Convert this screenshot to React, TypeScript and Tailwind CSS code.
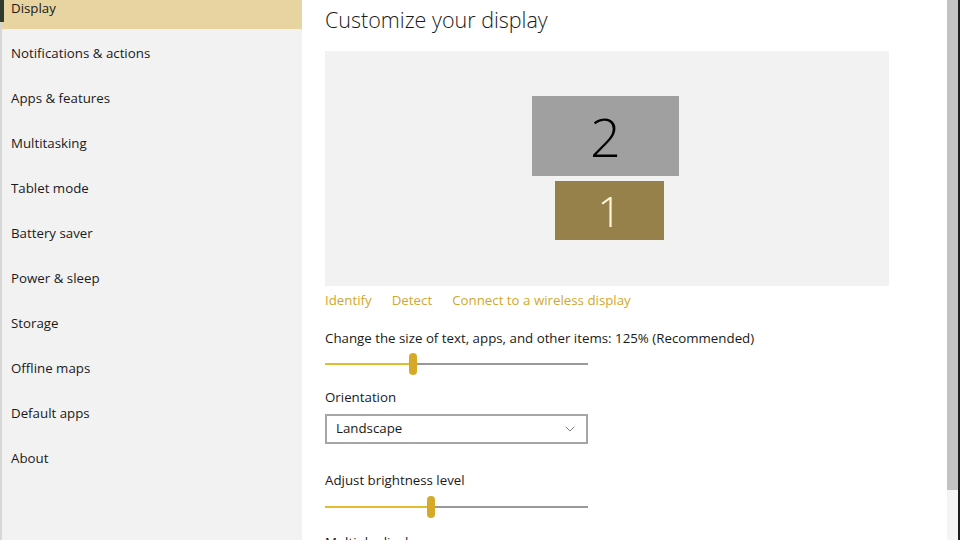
import { ChevronDown } from 'lucide-react';

const navItems = [
  'Notifications & actions',
  'Apps & features',
  'Multitasking',
  'Tablet mode',
  'Battery saver',
  'Power & sleep',
  'Storage',
  'Offline maps',
  'Default apps',
  'About',
];

const Slider = ({ value }: { value: number }) => (
  <div className="relative flex h-[22px] w-[263px] items-center">
    <div className="h-[2px] w-full bg-[#999999]" />
    <div className="absolute left-0 h-[2px] bg-[#e2bb2f]" style={{ width: value }} />
    <div
      className="absolute top-0 h-[22px] w-[8px] rounded-[4px] bg-[#d6a928]"
      style={{ left: value - 4 }}
    />
  </div>
);

const App = () => {
  return (
    <div
      className="flex h-[540px] w-[960px] overflow-hidden bg-white text-[#1a1a1a]"
      style={{ fontFamily: '"Open Sans", "Noto Sans", sans-serif' }}
    >
      {/* sidebar */}
      <aside className="flex w-[302px] shrink-0 flex-col border-l-2 border-[#d6d6d6] bg-[#f2f2f2]">
        <div className="relative flex h-[29px] shrink-0 items-end bg-[#e7d4a0] pb-[14px] pl-[9px] text-[13.3px] leading-none">
          <span className="absolute left-[-2px] top-0 h-[22px] w-[4px] bg-[#2f3b2c]" />
          Display
        </div>
        <ul className="flex flex-col pt-[15px]">
          {navItems.map((item) => (
            <li key={item} className="flex h-[45px] shrink-0 items-start pl-[9px] text-[13.3px] leading-[18px]">
              {item}
            </li>
          ))}
        </ul>
      </aside>

      {/* content */}
      <main className="relative flex-1 pl-[23px]">
        <h1 className="pt-[6px] text-[21.5px] font-light leading-[28px] text-[#1a1a1a]">
          Customize your display
        </h1>

        <div className="mt-[17px] flex h-[235px] w-[564px] flex-col items-center bg-[#f2f2f2] pt-[45px]">
          <div className="ml-[-3px] flex h-[80px] w-[147px] items-center justify-center bg-[#a0a0a0] text-[54px] font-light leading-none text-black">
            2
          </div>
          <div className="ml-[5px] mt-[5px] flex h-[59px] w-[109px] items-center justify-center bg-[#97814a] text-[42px] font-light leading-none text-[#fff6d8]">
            1
          </div>
        </div>

        <div className="mt-[5px] flex gap-[20px] text-[13.3px] leading-[18px] text-[#d2a72e]">
          <span>Identify</span>
          <span>Detect</span>
          <span>Connect to a wireless display</span>
        </div>

        <p className="mt-[20px] text-[13.3px] leading-[18px]">
          Change the size of text, apps, and other items: 125% (Recommended)
        </p>
        <div className="mt-[6px]">
          <Slider value={88} />
        </div>

        <p className="mt-[13px] text-[13.3px] leading-[18px]">Orientation</p>
        <div className="mt-[8px] flex h-[30px] w-[263px] items-center justify-between border-2 border-[#a6a6a6] pl-[9px] pr-[8px] text-[13.3px]">
          <span>Landscape</span>
          <ChevronDown size={16} strokeWidth={1.25} className="text-[#666666]" />
        </div>

        <p className="mt-[27px] text-[13.3px] leading-[18px]">Adjust brightness level</p>
        <div className="mt-[7px]">
          <Slider value={106} />
        </div>

        <p className="mt-[15px] text-[13.3px] leading-[18px]">Multiple displays</p>

        {/* scrollbar */}
        <div className="absolute right-0 top-0 flex h-full">
          <div className="flex h-full w-[11px] flex-col">
            <div className="h-[490px] bg-[#c2c2c2]" />
            <div className="flex-1 bg-[#f4f4f4]" />
          </div>
          <div className="h-full w-[2px] bg-[#1c1c1c]" />
        </div>
      </main>
    </div>
  );
};

export default App;
